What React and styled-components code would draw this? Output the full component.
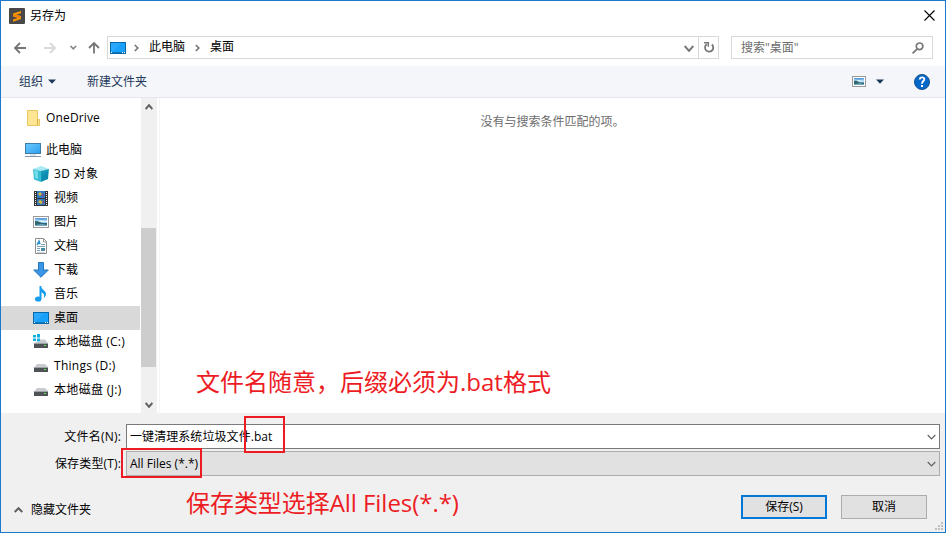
import React from 'react';
import styled, { createGlobalStyle } from 'styled-components';

const GlobalStyle = createGlobalStyle`
  * { box-sizing: border-box; }
  body { margin: 0; }
`;

const Dialog = styled.div`
  position: relative;
  display: flex;
  flex-direction: column;
  width: 946px;
  height: 533px;
  overflow: hidden;
  border: 1px solid #1979ca;
  background: #fff;
  color: #000;
  font: 12px/16px 'Open Sans', 'Noto Sans CJK SC', sans-serif;
  white-space: nowrap;
  svg { display: block; flex: none; }
`;

const Label = styled.span`
  letter-spacing: ${(p) => p.$spacing || 0}px;
  line-height: 16px;
`;

const TitleBar = styled.header`
  display: flex;
  align-items: center;
  height: 29px;
  padding: 0 10px 0 8px;
  gap: 5px;
`;

const CloseButton = styled.div`
  margin-left: auto;
`;

const AddressRow = styled.div`
  display: flex;
  height: 36px;
  padding: 6px 12px 7px;
`;

const NavButtons = styled.div`
  display: flex;
  align-items: center;
  width: 94px;
`;

const AddressBox = styled.div`
  display: flex;
  align-items: center;
  width: 612px;
  height: 23px;
  border: 1px solid #d9d9d9;
`;

const Crumb = styled(Label)`
  margin: -2px 10px 0 10px;
`;

const AddressChevron = styled.div`
  margin: 1px 4px 0 auto;
`;

const RefreshButton = styled.div`
  display: flex;
  align-items: center;
  justify-content: center;
  width: 20px;
  height: 21px;
  border-left: 1px solid #d9d9d9;
`;

const SearchBox = styled.div`
  display: flex;
  align-items: center;
  justify-content: space-between;
  width: 202px;
  height: 23px;
  margin-left: 12px;
  padding: 0 8px 0 9px;
  border: 1px solid #d9d9d9;
  color: #6d6d6d;
`;

const Toolbar = styled.div`
  display: flex;
  align-items: center;
  height: 32px;
  padding: 0 15px 0 18px;
  border-bottom: 1px solid #e5e7ea;
  background: #f4f6f9;
  color: #1e395b;
`;

const ToolItem = styled.div`
  display: flex;
  align-items: center;
  gap: ${(p) => p.$gap || 0}px;
  margin-left: ${(p) => p.$before};
`;

const Body = styled.div`
  display: flex;
  height: 315px;
`;

const Tree = styled.nav`
  width: 139px;
  height: 315px;
  padding-top: 8px;
`;

const TreeRow = styled.div`
  display: flex;
  align-items: center;
  gap: 5px;
  height: 24px;
  margin-top: ${(p) => (p.$group ? 8 : 0)}px;
  padding-left: ${(p) => (p.$root ? 24 : 32)}px;
  background: ${(p) => (p.$selected ? '#d9d9d9' : 'transparent')};
`;

const ScrollBar = styled.div`
  display: flex;
  flex-direction: column;
  align-items: flex-start;
  width: 16px;
  height: 315px;
  margin-left: 1px;
  background: #f0f0f0;
`;

const ScrollArrow = styled.div`
  padding: 6px 3px 0 3.5px;
  height: 17px;
`;

const ScrollThumb = styled.div`
  width: 15px;
  height: 139px;
  margin: 113px 0 29px;
  background: #cdcdcd;
`;

const FileList = styled.main`
  flex: 1;
  margin-left: 2px;
  padding-top: 16px;
  border-left: 1px solid #f5f5f5;
  color: #6d6d6d;
  text-align: center;
`;

const EmptyText = styled(Label)`
  display: block;
`;

const Footer = styled.footer`
  display: flex;
  flex-direction: column;
  flex: 1;
  padding: 11px 5px 0 0;
  background: #f0f0f0;
`;

const Field = styled.div`
  display: flex;
  align-items: center;
  height: 25px;
  margin-bottom: 2px;
`;

const FieldLabel = styled(Label)`
  width: 125px;
  padding-right: 5px;
  text-align: right;
`;

const Combo = styled.div`
  display: flex;
  align-items: center;
  justify-content: space-between;
  flex: 1;
  height: 25px;
  padding: 0 3px 0 3px;
  border: 1px solid ${(p) => (p.$filled ? '#adadad' : '#7a7a7a')};
  background: ${(p) => (p.$filled ? '#e1e1e1' : '#fff')};
`;

const Actions = styled.div`
  display: flex;
  align-items: center;
  height: 24px;
  margin-top: 17px;
  padding: 0 13px 0 13px;
`;

const FolderToggle = styled.div`
  display: flex;
  align-items: center;
  gap: 8px;
  margin: 5px auto 0 0;
`;

const Button = styled.button`
  width: 86px;
  height: 24px;
  margin-left: 14px;
  padding: 0;
  border: ${(p) => (p.$primary ? '2px solid #0078d7' : '1px solid #adadad')};
  background: #e1e1e1;
  color: #000;
  font: inherit;
`;

const Grip = styled.div`
  position: absolute;
  right: 2px;
  bottom: 2px;
`;

const Highlight = styled.div`
  position: absolute;
  left: ${(p) => p.$x}px;
  top: ${(p) => p.$y}px;
  width: ${(p) => p.$w}px;
  height: ${(p) => p.$h}px;
  border: 2px solid #ed1c24;
`;

const Note = styled.div`
  position: absolute;
  left: ${(p) => p.$x}px;
  top: ${(p) => p.$y}px;
  color: #ed1c24;
  font-size: 24px;
  line-height: 32px;
  letter-spacing: ${(p) => p.$spacing || 0}px;
`;

const Icon = ({ w = 16, h = 16, children }) => (
  <svg width={w} height={h} viewBox={`0 0 ${w} ${h}`} fill="none">{children}</svg>
);

const Chevron = ({ up, color = '#606060', thick = 2, w = 9, h = 6 }) => (
  <Icon w={w} h={h}>
    <path d={up ? `M.7 ${h - 1}L${w / 2} 1.2L${w - 0.7} ${h - 1}` : `M.7 1L${w / 2} ${h - 1.2}L${w - 0.7} 1`} stroke={color} strokeWidth={thick} />
  </Icon>
);

const CrumbArrow = () => (
  <Icon w={5} h={8}><path d="M.8 1L3.8 4L.8 7" stroke="#777" strokeWidth="1.7" /></Icon>
);

const Caret = () => (
  <Icon w={8} h={5}><path d="M0 .5H8L4 4.7Z" fill="#1e395b" /></Icon>
);

const SublimeIcon = () => (
  <Icon>
    <rect width="16" height="16" rx="1" fill="#484848" />
    <path d="M12 3L4 5.6V8.5L9 10L4 11.5V13.7L12 11V8L7.2 6.7L12 5.3Z" fill="#ff9800" />
    <path d="M4 6L12 8.3V10L4 8.5Z" fill="#ef8500" />
  </Icon>
);

const DesktopIcon = () => (
  <Icon>
    <rect x=".5" y="2.5" width="15" height="11" fill="#18a0fb" stroke="#0868aa" />
    <path d="M1 3H11L3 12H1Z" fill="#39b0ff" opacity=".5" />
    <path d="M1 12.5H15" stroke="#0b78c0" />
    <path d="M1 12.5H2M12 12.5H13M14 12.5H15" stroke="#fff" />
  </Icon>
);

const FolderIcon = () => (
  <Icon>
    <path d="M2.5.5H12.5V9.5H14.5V15.5H2.5Z" fill="#ffe694" stroke="#e9c75e" />
    <path d="M12.5 9.5V15" stroke="#d7ae42" />
  </Icon>
);

const ComputerIcon = () => (
  <Icon>
    <defs><linearGradient id="screen" x2="1" y2="1"><stop stopColor="#6dcaff" /><stop offset="1" stopColor="#2a9fee" /></linearGradient></defs>
    <rect x=".5" y="1.5" width="15" height="10" fill="url(#screen)" stroke="#407da6" />
    <path d="M5 13H11" stroke="#b8cbd9" />
    <path d="M0 14.5H16" stroke="#8297ac" />
  </Icon>
);

const CubeIcon = () => (
  <Icon>
    <path d="M0 3L8 0L16 3L8 5Z" fill="#a6e9f5" />
    <path d="M0 3L8 5V16L1 13.5Z" fill="#36bdd3" />
    <path d="M1 4L5 5V13L2 12Z" fill="#72dce9" />
    <path d="M8 5L16 3L15 13L8 16Z" fill="#1499bb" />
    <path d="M9 10L15 5V13L9 15Z" fill="#087ba1" opacity=".5" />
  </Icon>
);

const VideoIcon = () => (
  <Icon>
    <rect x="1" y="1" width="14" height="15" fill="#333" />
    <rect x="4" y="1" width="8" height="7" fill="#347ac4" />
    <rect x="4" y="9" width="8" height="6" fill="#3979bf" />
    <path d="M5 4L7 2L9 4L7 6ZM5 12L7 10L10 12L8 14Z" fill="#d4bd37" />
    <path d="M8 5L10 3L11 7ZM9 12L11 10V14Z" fill="#854a79" />
    <path d="M2.5 2V15M13.5 2V15" stroke="#eee" strokeDasharray="1 1" />
  </Icon>
);

const PictureIcon = ({ w = 16, h = 12 }) => (
  <svg width={w} height={h} viewBox={`0 0 ${w} ${h}`} fill="none">
    <rect x=".5" y=".5" width={w - 1} height={h - 1} fill="#fff" stroke="#999" />
    <svg x="2" y="2" width={w - 4} height={h - 4} viewBox="0 0 12 8" preserveAspectRatio="none">
      <path d="M0 0H12V8H0Z" fill="#9acdf4" />
      <path d="M0 0H12V1.5L6 2L0 1Z" fill="#5d9ed9" />
      <path d="M2 3L6 2.3L12 3V4H3Z" fill="#d9f0f4" />
      <path d="M0 3L3 3.2L7 5H12V7H0Z" fill="#31666f" />
      <path d="M0 7L7 6L12 7V8H0Z" fill="#72a7bd" />
    </svg>
  </svg>
);

const DocumentIcon = () => (
  <Icon>
    <path d="M2.5.5H10.5L13.5 3.5V15.5H2.5Z" fill="#fff" stroke="#8c8c8c" />
    <path d="M10.5.5V4H13.5" stroke="#999" />
    <path d="M4 7L6 3L7 6M4.5 5.5H7" stroke="#218cce" strokeWidth="1.3" />
    <path d="M8 6.5H12M4 8.5H12M4 10.5H7M4 12.5H7" stroke="#7aa4bd" />
    <rect x="8" y="10" width="4" height="3" fill="#498ca2" />
    <path d="M4 14.5H12" stroke="#c6d1d8" />
  </Icon>
);

const DownloadIcon = () => (
  <Icon><path d="M5.5.5H10.5V8H15.3L8 15.3L.7 8H5.5Z" fill="#3995e6" stroke="#2577bc" /></Icon>
);

const MusicIcon = () => (
  <Icon>
    <ellipse cx="5.2" cy="13" rx="3.2" ry="2.6" fill="#149dec" />
    <path d="M6.5 0H8.2C8.2 4 13 4.3 13 8C13 10 11.8 11.5 10.8 12.2C12 8.6 10.5 7.6 8.5 6.3V13H6.5Z" fill="#149dec" />
  </Icon>
);

const DriveIcon = ({ system }) => (
  <Icon>
    {system && <path d="M0 1H3V3.5H0ZM4 0H7V3.5H4ZM0 4.5H3V7H0ZM4 4.5H7V7.5H4Z" fill="#13afe4" />}
    <path d={system ? 'M7 5.5H12L15 9V10H1L3 8H7Z' : 'M4 6H12L15 9V10H1Z'} fill="#c9cbce" />
    <rect x="1" y="9" width="14" height="5" rx=".5" fill="#505356" />
    <path d="M1 9.5H15" stroke="#a0a3a6" />
    <rect x="11" y="11" width="2" height="1" fill="#56ee4f" />
  </Icon>
);

const HelpIcon = () => (
  <Icon>
    <circle cx="8" cy="8" r="7.5" fill="#0669ca" stroke="#16518c" />
    <path d="M5.7 5.5C6 2.6 10.5 2.7 10.3 5.4C10.2 7 8 7.2 8 9.7" stroke="#fff" strokeWidth="1.9" />
    <rect x="7" y="11" width="2" height="2" fill="#fff" />
  </Icon>
);

const places = [
  { text: 'OneDrive', icon: <FolderIcon />, root: true, spacing: 0.15 },
  { text: '此电脑', icon: <ComputerIcon />, root: true, group: true },
  { text: '3D 对象', icon: <CubeIcon />, spacing: 0.3 },
  { text: '视频', icon: <VideoIcon /> },
  { text: '图片', icon: <PictureIcon /> },
  { text: '文档', icon: <DocumentIcon /> },
  { text: '下载', icon: <DownloadIcon /> },
  { text: '音乐', icon: <MusicIcon /> },
  { text: '桌面', icon: <DesktopIcon />, selected: true },
  { text: '本地磁盘 (C:)', icon: <DriveIcon system />, spacing: 0.22 },
  { text: 'Things (D:)', icon: <DriveIcon />, spacing: 0.27 },
  { text: '本地磁盘 (J:)', icon: <DriveIcon />, spacing: 0.33 },
];

export default function App() {
  return (
    <>
      <GlobalStyle />
      <Dialog>
        <TitleBar>
          <SublimeIcon />
          <Label>另存为</Label>
          <CloseButton>
            <Icon w={11} h={11}><path d="M.5 .5L10.5 10.5M10.5 .5L.5 10.5" stroke="#000" strokeWidth="1.1" /></Icon>
          </CloseButton>
        </TitleBar>

        <AddressRow>
          <NavButtons>
            <Icon w={94} h={16}>
              <path d="M1.5 8H13M7 3L2 8L7 13" stroke="#757575" strokeWidth="1.8" />
              <path d="M31 8H42.5M37 3L42 8L37 13" stroke="#d9d9d9" strokeWidth="1.8" />
              <path d="M57.5 6L60.3 8.8L63.1 6" stroke="#858585" strokeWidth="1.7" />
              <path d="M81 13.5V3M76 8L81 3L86 8" stroke="#757575" strokeWidth="1.8" />
            </Icon>
          </NavButtons>
          <AddressBox>
            <ToolItem $before="2px"><DesktopIcon /></ToolItem>
            <ToolItem $before="8px"><CrumbArrow /></ToolItem>
            <Crumb>此电脑</Crumb>
            <CrumbArrow />
            <Crumb>桌面</Crumb>
            <AddressChevron><Chevron w={10} h={7} color="#777" /></AddressChevron>
            <RefreshButton>
              <Icon w={12} h={13}>
                <path d="M8.8 3.5A4.1 4.1 0 1 1 3.7 3.3" stroke="#777" strokeWidth="1.8" />
                <path d="M1 1.7H5.3V5.8" stroke="#777" strokeWidth="1.5" />
              </Icon>
            </RefreshButton>
          </AddressBox>
          <SearchBox>
            <Label>搜索"桌面"</Label>
            <Icon w={12} h={12}>
              <circle cx="7.6" cy="4.3" r="3.3" stroke="#777" strokeWidth="1.7" />
              <path d="M5.2 6.8L.6 11.4" stroke="#777" strokeWidth="1.8" />
            </Icon>
          </SearchBox>
        </AddressRow>

        <Toolbar>
          <ToolItem $gap={5}><Label>组织</Label><Caret /></ToolItem>
          <ToolItem $before="31px"><Label>新建文件夹</Label></ToolItem>
          <ToolItem $before="auto" $gap={10}><PictureIcon w={14} h={11} /><Caret /></ToolItem>
          <ToolItem $before="30px"><HelpIcon /></ToolItem>
        </Toolbar>

        <Body>
          <Tree>
            {places.map((p) => (
              <TreeRow key={p.text} $root={p.root} $group={p.group} $selected={p.selected}>
                {p.icon}
                <Label $spacing={p.spacing}>{p.text}</Label>
              </TreeRow>
            ))}
          </Tree>
          <ScrollBar>
            <ScrollArrow><Chevron up w={8} /></ScrollArrow>
            <ScrollThumb />
            <ScrollArrow><Chevron w={8} /></ScrollArrow>
          </ScrollBar>
          <FileList><EmptyText>没有与搜索条件匹配的项。</EmptyText></FileList>
        </Body>

        <Footer>
          <Field>
            <FieldLabel $spacing={0.2}>文件名(N):</FieldLabel>
            <Combo><Label $spacing={0.07}>一键清理系统垃圾文件.bat</Label><Chevron thick={1.2} /></Combo>
          </Field>
          <Field>
            <FieldLabel $spacing={0.15}>保存类型(T):</FieldLabel>
            <Combo $filled><Label>All Files (*.*)</Label><Chevron thick={1.2} /></Combo>
          </Field>
          <Actions>
            <FolderToggle><Chevron up /><Label>隐藏文件夹</Label></FolderToggle>
            <Button $primary>保存(S)</Button>
            <Button>取消</Button>
          </Actions>
        </Footer>

        <Grip>
          <Icon w={8} h={8}>
            <path d="M6 0h2v2h-2zM3 3h2v2h-2zM6 3h2v2h-2zM0 6h2v2h-2zM3 6h2v2h-2zM6 6h2v2h-2z" fill="#bfbfbf" />
          </Icon>
        </Grip>
        <Highlight $x={243} $y={415} $w={41} $h={37} />
        <Highlight $x={120} $y={447} $w={81} $h={30} />
        <Note $x={195} $y={365}>文件名随意，后缀必须为.bat格式</Note>
        <Note $x={185} $y={486} $spacing={-0.05}>保存类型选择All Files(*.*)</Note>
      </Dialog>
    </>
  );
}
